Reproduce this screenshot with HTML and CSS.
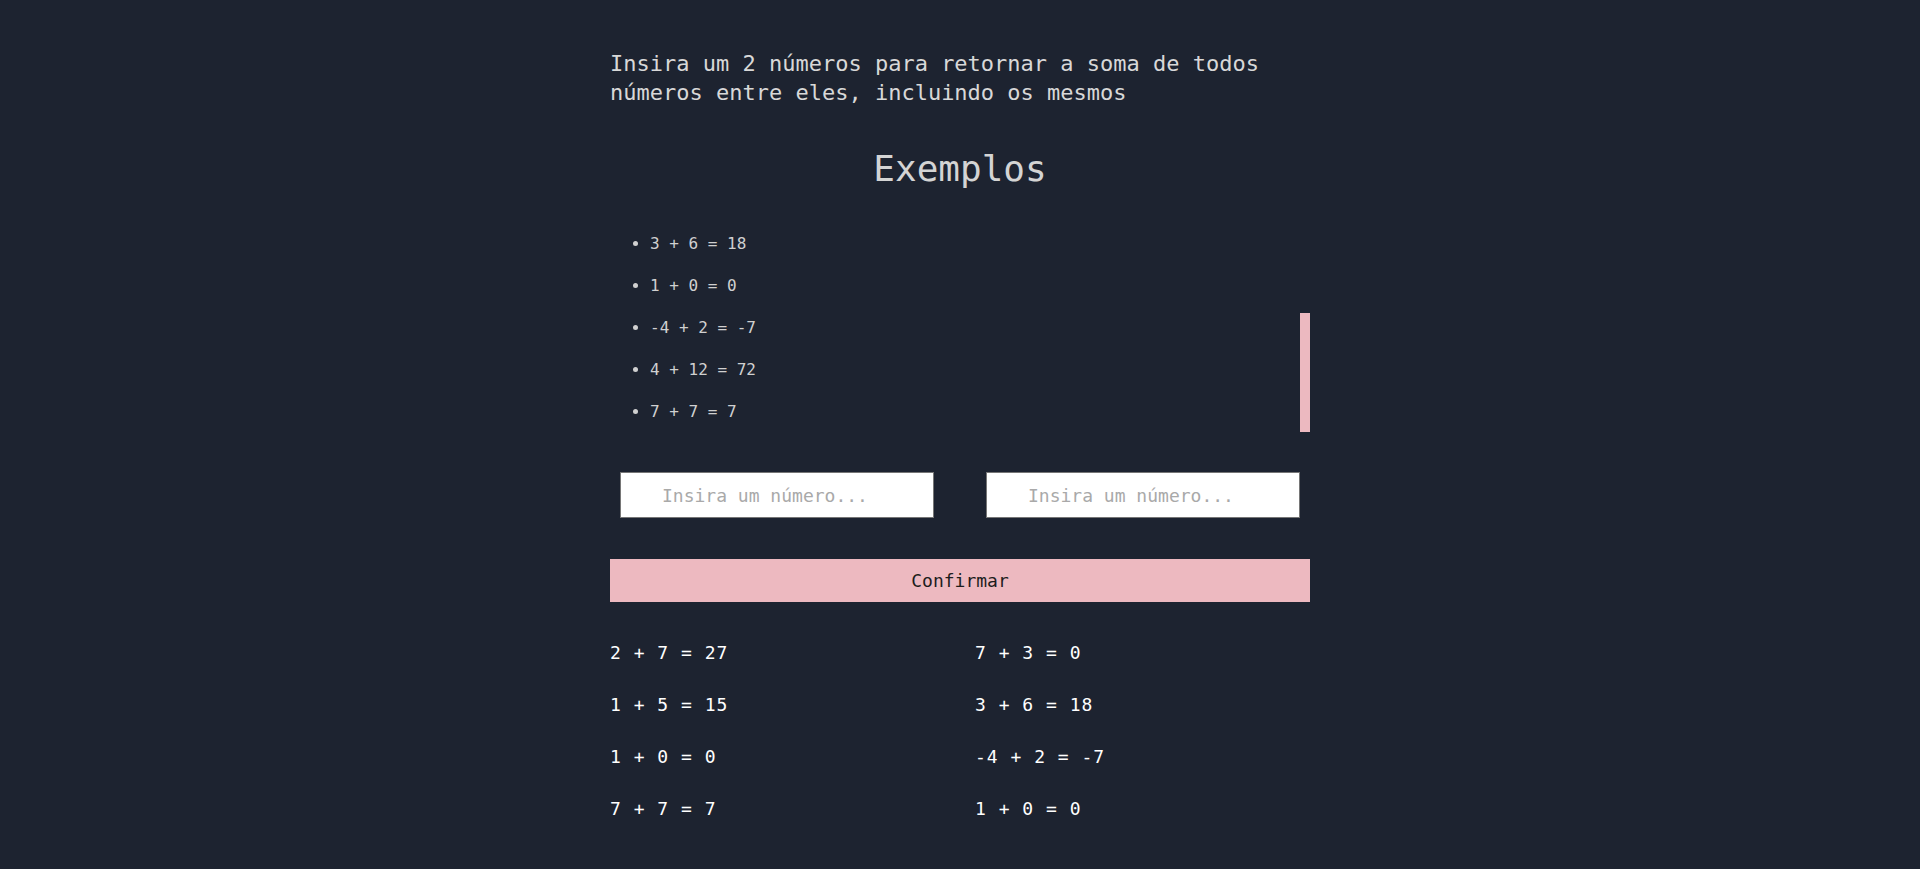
FILE: index.html
```html
<!DOCTYPE html>
<html lang="pt-BR">
<head>
<meta charset="utf-8">
<title>Soma</title>
<link rel="stylesheet" href="styles.css">
</head>
<body>
<main class="container">
  <p class="intro">Insira um 2 números para retornar a soma de todos números entre eles, incluindo os mesmos</p>
  <h1 class="title">Exemplos</h1>
  <div class="examples">
    <ul class="example-list">
      <li>3 + 6 = 18</li>
      <li>1 + 0 = 0</li>
      <li>-4 + 2 = -7</li>
      <li>4 + 12 = 72</li>
      <li>7 + 7 = 7</li>
    </ul>
    <div class="thumb"></div>
  </div>
  <div class="inputs">
    <input class="num" type="text" placeholder="Insira um número...">
    <input class="num" type="text" placeholder="Insira um número...">
  </div>
  <button class="confirm" type="button">Confirmar</button>
  <div class="results">
    <span>2 + 7 = 27</span>
    <span>7 + 3 = 0</span>
    <span>1 + 5 = 15</span>
    <span>3 + 6 = 18</span>
    <span>1 + 0 = 0</span>
    <span>-4 + 2 = -7</span>
    <span>7 + 7 = 7</span>
    <span>1 + 0 = 0</span>
  </div>
</main>
</body>
</html>
```
FILE: styles.css
```css
html, body {
  margin: 0;
  padding: 0;
  background: #1d2330;
  height: 100%;
}
body {
  font-family: "DejaVu Sans Mono", "Liberation Mono", monospace;
  color: #d6d6d6;
}
.container {
  width: 700px;
  margin: 0 auto;
  padding-top: 49px;
}
.intro {
  margin: 0;
  font-size: 22px;
  line-height: 29px;
  color: #d8d8d8;
}
.title {
  margin: 40px 0 0;
  text-align: center;
  font-size: 36px;
  line-height: 43px;
  font-weight: normal;
  color: #d4d4d4;
}
.examples {
  position: relative;
  margin-top: 33px;
}
.example-list {
  margin: 0;
  padding-left: 40px;
  font-size: 16px;
  line-height: 42px;
  color: #d0d0d0;
}
.thumb {
  position: absolute;
  right: 0;
  bottom: 1px;
  width: 10px;
  height: 119px;
  background: #ecb9c0;
}
.inputs {
  display: flex;
  justify-content: space-between;
  padding: 0 10px;
  margin-top: 39px;
}
.num {
  width: 314px;
  height: 46px;
  box-sizing: border-box;
  padding: 0 0 0 41px;
  border: 1px solid #767676;
  background: #fff;
  font-family: "DejaVu Sans Mono", "Liberation Mono", monospace;
  font-size: 18px;
  color: #222;
  outline: none;
}
.num::placeholder {
  color: #a9a9a9;
}
.confirm {
  display: block;
  width: 100%;
  height: 43px;
  margin-top: 41px;
  border: none;
  background: #edb9c0;
  font-family: "DejaVu Sans Mono", "Liberation Mono", monospace;
  font-size: 18px;
  color: #1d1d1d;
}
.results {
  display: grid;
  grid-template-columns: 1fr 1fr;
  column-gap: 30px;
  margin-top: 25px;
  font-size: 18px;
  line-height: 52px;
  letter-spacing: 1px;
  color: #ffffff;
}
```
